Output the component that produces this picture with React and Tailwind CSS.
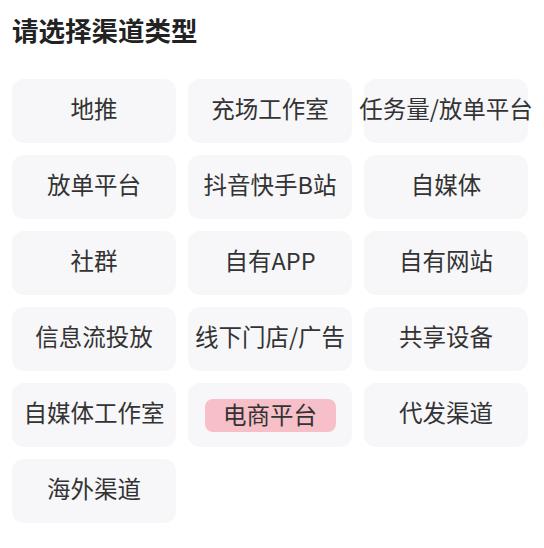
import React, { useState } from "react";

const channels = [
  "地推",
  "充场工作室",
  "任务量/放单平台",
  "放单平台",
  "抖音快手B站",
  "自媒体",
  "社群",
  "自有APP",
  "自有网站",
  "信息流投放",
  "线下门店/广告",
  "共享设备",
  "自媒体工作室",
  "电商平台",
  "代发渠道",
  "海外渠道",
];

export default function App() {
  const [selected, setSelected] = useState("电商平台");

  return (
    <div
      className="min-h-screen bg-white pl-3 pr-4 pt-[12px]"
      style={{ fontFamily: '"Noto Sans CJK SC", "Noto Sans", sans-serif' }}
    >
      <h1 className="text-[26.5px] leading-[36px] font-bold text-[#222]">请选择渠道类型</h1>

      <div className="grid grid-cols-3 gap-3 mt-[31px]">
        {channels.map((c) => (
          <button
            key={c}
            onClick={() => setSelected(c)}
            className="h-16 rounded-xl bg-[#f7f7f9] flex items-center justify-center overflow-visible whitespace-nowrap"
          >
            <span
              className={
                c === selected
                  ? "bg-[#f7c0c8] rounded-lg w-[131px] h-[33px] flex items-center justify-center text-[23.5px] text-[#333]"
                  : "text-[23.5px] text-[#333] -mt-1"
              }
            >
              {c}
            </span>
          </button>
        ))}
      </div>
    </div>
  );
}
